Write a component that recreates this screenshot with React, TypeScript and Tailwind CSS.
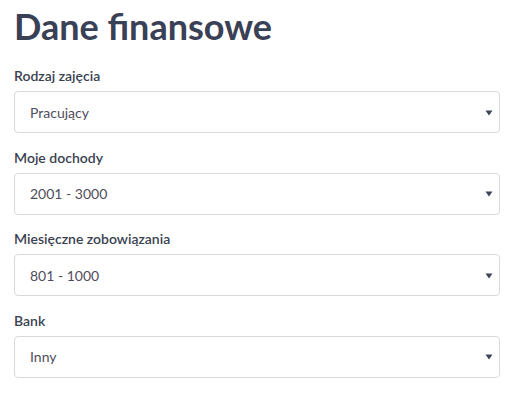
const fields = [
  { label: "Rodzaj zajęcia", value: "Pracujący" },
  { label: "Moje dochody", value: "2001 - 3000" },
  { label: "Miesięczne zobowiązania", value: "801 - 1000" },
  { label: "Bank", value: "Inny" },
];

function SelectBox({ value }: { value: string }) {
  return (
    <div className="flex h-[42px] items-center justify-between rounded-[4px] border border-[#dadada] bg-white pl-[15px] pr-[6px]">
      <span className="text-[14px] text-[#4f4d5c]">{value}</span>
      <svg width="8" height="6" viewBox="0 0 8 6" className="mt-[1px]">
        <path d="M0.5 0.5 H7.5 L4 5.5 Z" fill="#3d4458" />
      </svg>
    </div>
  );
}

export default function App() {
  return (
    <div
      className="min-h-screen bg-white px-[14px] pt-[5px]"
      style={{ fontFamily: "Lato, 'Open Sans', sans-serif" }}
    >
      <h1 className="mb-[18px] text-[36px] font-bold leading-[1.2] text-[#3a4055]">
        Dane finansowe
      </h1>
      <div className="flex flex-col gap-[14.5px]">
        {fields.map((f) => (
          <div key={f.label} className="flex flex-col">
            <label className="mb-[5px] text-[14px] font-semibold leading-[20px] text-[#3a3f51]">
              {f.label}
            </label>
            <SelectBox value={f.value} />
          </div>
        ))}
      </div>
    </div>
  );
}
